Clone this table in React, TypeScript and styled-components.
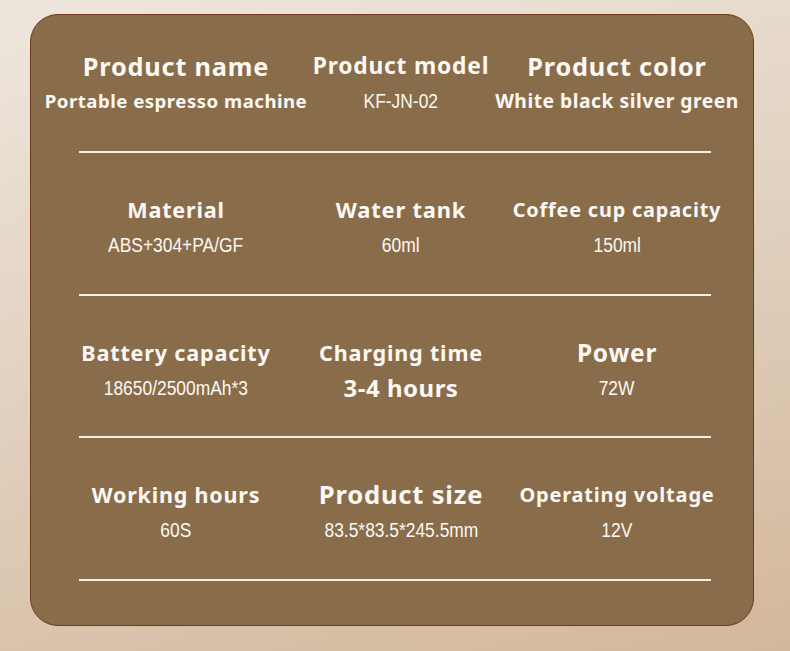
// Library Imports
import * as React from 'react';
import styled, { createGlobalStyle } from 'styled-components';

// Styling
const GlobalStyle = createGlobalStyle`
	html, body {
		margin: 0;
		padding: 0;
	}
	body {
		width: 790px;
		height: 651px;
		overflow: hidden;
		background: linear-gradient(165deg, #eee6dd 0%, #e2d2c1 45%, #d2b79b 100%);
		font-family: "Noto Sans", "Liberation Sans", sans-serif;
	}
`

const Page = styled.main`
	box-sizing: border-box;
	width: 790px;
	height: 651px;
	padding: 14px 36px 0 30px;
`

const Card = styled.section`
	box-sizing: border-box;
	width: 724px;
	height: 612px;
	padding: 36px 0 0;
	background-color: #896d4b;
	border: 1px solid #6e3a1a;
	border-radius: 28px;
	display: flex;
	flex-direction: column;
`

const Row = styled.div<{ $first?: boolean }>`
	display: grid;
	grid-template-columns: 290px 160px 1fr;
	padding: ${({ $first }) => ($first ? '0 0 37px' : '42px 0 35.5px')};
`

const Cell = styled.div`
	display: flex;
	flex-direction: column;
	align-items: center;
	gap: 7px;
	color: #fcf8f3;
	white-space: nowrap;
`

const Label = styled.div<{ $size: number }>`
	height: 30px;
	line-height: 30px;
	font-size: ${({ $size }) => $size}px;
	font-weight: 700;
	letter-spacing: 0.8px;
`

const Value = styled.div<{ $bold?: boolean; $size?: number }>`
	height: 26px;
	line-height: 26px;
	font-family: ${({ $bold }) => ($bold ? '"Noto Sans", sans-serif' : '"Liberation Sans", Arial, sans-serif')};
	font-weight: ${({ $bold }) => ($bold ? 700 : 400)};
	font-size: ${({ $size, $bold }) => $size ?? ($bold ? 18 : 20)}px;
	letter-spacing: ${({ $bold }) => ($bold ? '0.5px' : '0')};
	transform: ${({ $bold }) => ($bold ? 'none' : 'scaleX(0.87)')};
`

const Divider = styled.hr`
	width: 632px;
	height: 2px;
	margin: 0 0 0 48px;
	border: none;
	background-color: #f6efe6;
`

// Local Types
type Spec = {
	label: string,
	labelSize: number,
	value: string,
	bold?: boolean,
	valueSize?: number,
}

const rows : Spec[][] = [
	[
		{ label: 'Product name', labelSize: 25.3, value: 'Portable espresso machine', bold: true, valueSize: 18.6 },
		{ label: 'Product model', labelSize: 22.8, value: 'KF-JN-02' },
		{ label: 'Product color', labelSize: 25.3, value: 'White black silver green', bold: true, valueSize: 19.3 },
	],
	[
		{ label: 'Material', labelSize: 21.6, value: 'ABS+304+PA/GF' },
		{ label: 'Water tank', labelSize: 21.9, value: '60ml' },
		{ label: 'Coffee cup capacity', labelSize: 19.9, value: '150ml' },
	],
	[
		{ label: 'Battery capacity', labelSize: 21.6, value: '18650/2500mAh*3' },
		{ label: 'Charging time', labelSize: 21.6, value: '3-4 hours', bold: true, valueSize: 24 },
		{ label: 'Power', labelSize: 24.4, value: '72W' },
	],
	[
		{ label: 'Working hours', labelSize: 21.5, value: '60S' },
		{ label: 'Product size', labelSize: 25.6, value: '83.5*83.5*245.5mm' },
		{ label: 'Operating voltage', labelSize: 20, value: '12V' },
	],
]

// Render
const App = () => {
	return (
		<>
			<GlobalStyle />
			<Page>
				<Card>
					{rows.map((row, index) => (
						<React.Fragment key={`row-${index}`}>
							<Row $first={index === 0}>
								{row.map((spec) => (
									<Cell key={spec.label}>
										<Label $size={spec.labelSize}>{spec.label}</Label>
										<Value $bold={spec.bold} $size={spec.valueSize}>{spec.value}</Value>
									</Cell>
								))}
							</Row>
							<Divider />
						</React.Fragment>
					))}
				</Card>
			</Page>
		</>
	)
}

export default App;
